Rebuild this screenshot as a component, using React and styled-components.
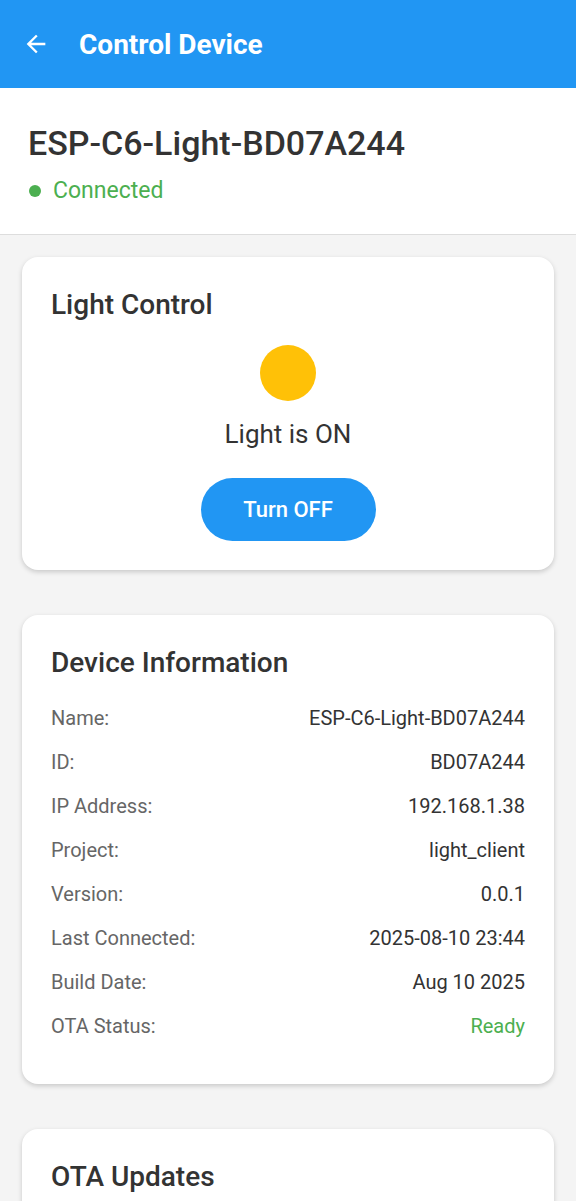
import React from "react";
import styled, { createGlobalStyle } from "styled-components";

const GlobalStyle = createGlobalStyle`
  html, body {
    margin: 0;
    padding: 0;
    background: #f4f4f4;
    font-family: Roboto, "Noto Sans", sans-serif;
    color: #333333;
  }
`;

const info = [
  { label: "Name:", value: "ESP-C6-Light-BD07A244" },
  { label: "ID:", value: "BD07A244" },
  { label: "IP Address:", value: "192.168.1.38" },
  { label: "Project:", value: "light_client" },
  { label: "Version:", value: "0.0.1" },
  { label: "Last Connected:", value: "2025-08-10 23:44" },
  { label: "Build Date:", value: "Aug 10 2025" },
  { label: "OTA Status:", value: "Ready", ok: true },
];

const App = () => {
  return (
    <>
      <GlobalStyle />
      <Page>
        <AppBar>
          <BackButton aria-label="Back">
            <svg width="28" height="28" viewBox="0 0 24 24" fill="#ffffff">
              <path d="M20 11H7.83l5.59-5.59L12 4l-8 8 8 8 1.41-1.41L7.83 13H20v-2z" />
            </svg>
          </BackButton>
          <BarTitle>Control Device</BarTitle>
        </AppBar>

        <DeviceHeader>
          <DeviceName>ESP-C6-Light-BD07A244</DeviceName>
          <Status>
            <Dot />
            Connected
          </Status>
        </DeviceHeader>

        <Cards>
          <Card $bottom={29}>
            <CardTitle>Light Control</CardTitle>
            <LightBox>
              <Bulb $on />
              <LightText>Light is ON</LightText>
              <ToggleButton type="button">Turn OFF</ToggleButton>
            </LightBox>
          </Card>

          <Card $bottom={36}>
            <CardTitle>Device Information</CardTitle>
            <InfoList>
              {info.map((row) => (
                <InfoRow key={row.label}>
                  <Label>{row.label}</Label>
                  <Value $ok={row.ok}>{row.value}</Value>
                </InfoRow>
              ))}
            </InfoList>
          </Card>

          <Card>
            <CardTitle>OTA Updates</CardTitle>
          </Card>
        </Cards>
      </Page>
    </>
  );
};

export default App;

const Page = styled.div`
  min-height: 100vh;
  background: #f4f4f4;
`;

const AppBar = styled.header`
  height: 88px;
  background: #2196f3;
  display: flex;
  align-items: center;
  padding: 0 22px;
  box-sizing: border-box;
`;

const BackButton = styled.button`
  background: none;
  border: none;
  padding: 0;
  width: 28px;
  height: 28px;
  display: flex;
  cursor: pointer;
`;

const BarTitle = styled.h1`
  margin: 0 0 0 29px;
  font-size: 28px;
  font-weight: 700;
  color: #ffffff;
`;

const DeviceHeader = styled.section`
  background: #ffffff;
  padding: 35px 28px 29px;
  border-bottom: 1px solid #dddddd;
`;

const DeviceName = styled.h2`
  margin: 0;
  font-size: 34px;
  font-weight: 500;
  line-height: 40px;
  color: #333333;
`;

const Status = styled.div`
  display: flex;
  align-items: center;
  margin-top: 14px;
  font-size: 23px;
  line-height: 28px;
  color: #4caf50;
`;

const Dot = styled.span`
  width: 12px;
  height: 12px;
  border-radius: 50%;
  background: #4caf50;
  margin: 0 12px 0 1px;
`;

const Cards = styled.main`
  display: flex;
  flex-direction: column;
  gap: 45px;
  padding: 22px 22px 40px;
`;

const Card = styled.div`
  background: #ffffff;
  border-radius: 16px;
  padding: 31px 29px ${(p) => p.$bottom ?? 28}px;
  box-shadow: 0 2px 5px rgba(0, 0, 0, 0.18);
`;

const CardTitle = styled.h3`
  margin: 0;
  font-size: 28px;
  font-weight: 500;
  line-height: 34px;
  color: #333333;
`;

const LightBox = styled.div`
  display: flex;
  flex-direction: column;
  align-items: center;
  padding-top: 23px;
`;

const Bulb = styled.div`
  width: 56px;
  height: 56px;
  border-radius: 50%;
  background: ${(p) => (p.$on ? "#ffc107" : "#cccccc")};
`;

const LightText = styled.div`
  margin-top: 18px;
  font-size: 26px;
  line-height: 30px;
  color: #333333;
`;

const ToggleButton = styled.button`
  margin-top: 29px;
  width: 175px;
  height: 63px;
  border: none;
  border-radius: 32px;
  background: #2196f3;
  color: #ffffff;
  font-family: Roboto, sans-serif;
  font-size: 22px;
  font-weight: 500;
  cursor: pointer;
`;

const InfoList = styled.div`
  display: flex;
  flex-direction: column;
  margin-top: 16px;
`;

const InfoRow = styled.div`
  display: flex;
  justify-content: space-between;
  align-items: center;
  height: 44px;
  font-size: 20px;
`;

const Label = styled.span`
  color: #666666;
`;

const Value = styled.span`
  color: ${(p) => (p.$ok ? "#4caf50" : "#333333")};
`;
